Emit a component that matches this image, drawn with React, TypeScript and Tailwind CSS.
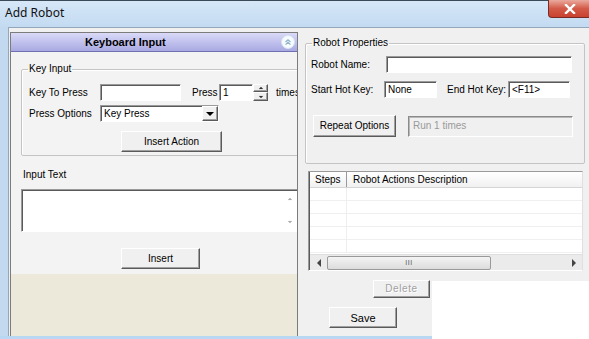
import React from "react";

const sunken =
  "bg-white border border-t-[#9a9a9a] border-l-[#9a9a9a] border-b-white border-r-white shadow-[inset_1px_1px_0_#5a5a5a]";
const raised =
  "bg-[#f0f0f0] border border-t-white border-l-white border-b-[#5a5a5a] border-r-[#5a5a5a] shadow-[inset_-1px_-1px_0_#a0a0a0]";

function Btn({ label, cls, disabled }: { label: string; cls: string; disabled?: boolean }) {
  return (
    <div className={`${raised} ${cls} flex items-center justify-center shrink-0`}>
      <span className={disabled ? "text-[#a0a0a0] [text-shadow:1px_1px_0_#ffffff] tracking-[0.6px]" : ""}>{label}</span>
    </div>
  );
}

function Tri({ dir, cls }: { dir: "up" | "down" | "left" | "right"; cls?: string }) {
  const pts =
    dir === "up" ? "0,4 4,0 8,4" : dir === "down" ? "0,0 8,0 4,4" : dir === "left" ? "4,0 4,8 0,4" : "0,0 0,8 4,4";
  const w = dir === "up" || dir === "down" ? 8 : 4;
  const h = dir === "up" || dir === "down" ? 4 : 8;
  return (
    <svg width={w} height={h} viewBox={`0 0 ${w} ${h}`} className={cls}>
      <polygon points={pts} fill="currentColor" />
    </svg>
  );
}

export default function App() {
  return (
    <div
      className="relative w-[589px] h-[339px] overflow-hidden flex flex-col bg-[#c2d9f0] text-[10px] leading-[12px] text-black"
      style={{ fontFamily: '"Liberation Sans", Arial, sans-serif' }}
    >
      {/* Title bar */}
      <div className="h-[27px] shrink-0 flex items-center pl-[5px] pb-[3px] border-t border-[#3c4a58] bg-gradient-to-b from-[#d6e7f8] to-[#c3daf1]">
        <span className="text-[12px] text-[#111]" style={{ fontFamily: '"Noto Sans", sans-serif' }}>
          Add Robot
        </span>
      </div>
      <div className="absolute left-[548px] top-0 w-[45px] h-[18px] rounded-bl-[4px] border border-t-0 border-[#7a2b25] bg-gradient-to-b from-[#e9a99d] via-[#d35a48] to-[#c9412f] flex items-center justify-center pr-[2px]">
        <svg width="12" height="10" viewBox="0 0 12 10">
          <path d="M2 1 L10 9 M10 1 L2 9" stroke="#ffffff" strokeWidth="2.4" strokeLinecap="square" />
        </svg>
      </div>

      {/* Body */}
      <div className="flex flex-1">
        <div className="w-[8px] shrink-0" />
        <div className="flex-1 flex items-start bg-[#f0f0f0] border-t border-l border-[#93a6ba]">
          {/* Left panel */}
          <div className="ml-[1px] mt-[4px] w-[288px] self-stretch flex flex-col overflow-hidden border-l border-r border-t border-[#7c7c7c] bg-[#f3f3f3]">
            <div className="h-[19px] shrink-0 flex items-center justify-between border-b border-[#7070b4] bg-gradient-to-b from-[#dadaf8] to-[#a9a9e2]">
              <span className="pl-[74px] text-[11px] font-bold">Keyboard Input</span>
              <svg width="14" height="14" viewBox="0 0 14 14" className="mr-[2px]">
                <circle cx="7" cy="7" r="6.5" fill="#f6fbfd" stroke="#d8e4f0" />
                <path d="M4.5 7 L7 4.8 L9.5 7 M4.5 9.6 L7 7.4 L9.5 9.6" fill="none" stroke="#8fb3c8" strokeWidth="1.2" />
              </svg>
            </div>

            <fieldset className="ml-[10px] mt-[11px] w-[290px] shrink-0 border border-[#c4c4c4] rounded-[2px] shadow-[inset_1px_1px_0_#ffffff]">
              <legend className="ml-[6px] px-[1px] leading-[12px]">Key Input</legend>
              <div className="pl-[7px] pt-[9px] pb-[3px]">
                <div className="flex items-center h-[17px]">
                  <span className="w-[71px] shrink-0">Key To Press</span>
                  <div className={`${sunken} w-[81px] h-[17px] shrink-0`} />
                  <span className="ml-[11px] w-[27px] shrink-0">Press</span>
                  <div className={`${sunken} w-[34px] h-[17px] shrink-0 flex items-center pl-[3px]`}>1</div>
                  <div className="w-[15px] h-[17px] shrink-0 flex flex-col">
                    <div className={`${raised} h-[8px] flex items-center justify-center text-[#333]`}>
                      <Tri dir="up" cls="scale-[0.6]" />
                    </div>
                    <div className={`${raised} h-[9px] flex items-center justify-center text-[#333]`}>
                      <Tri dir="down" cls="scale-[0.6]" />
                    </div>
                  </div>
                  <span className="ml-[8px]">times</span>
                </div>
                <div className="flex items-center h-[17px] mt-[4px]">
                  <span className="w-[71px] shrink-0">Press Options</span>
                  <div className={`${sunken} w-[119px] h-[17px] shrink-0 flex items-center justify-between pl-[3px]`}>
                    <span>Key Press</span>
                    <div className={`${raised} w-[16px] h-[15px] flex items-center justify-center text-black`}>
                      <Tri dir="down" />
                    </div>
                  </div>
                </div>
                <Btn label="Insert Action" cls="mt-[9px] ml-[92px] w-[101px] h-[21px]" />
              </div>
            </fieldset>

            <span className="ml-[12px] mt-[13px] shrink-0">Input Text</span>
            <div className={`${sunken} ml-[10px] mt-[8px] w-[280px] h-[43px] shrink-0 flex justify-end`}>
              <div className="w-[16px] mr-[2px] flex flex-col items-center justify-between py-[7px] text-[#a8a8a8]">
                <Tri dir="up" cls="scale-[0.6]" />
                <Tri dir="down" cls="scale-[0.6]" />
              </div>
            </div>
            <Btn label="Insert" cls="ml-[110px] mt-[16px] w-[79px] h-[21px]" />
            <div className="mt-[5px] flex-1 bg-[#ece8da]" />
          </div>

          {/* Right column */}
          <div className="ml-[7px] flex flex-col">
            <fieldset className="mt-[9px] w-[280px] border border-[#c4c4c4] rounded-[2px] shadow-[inset_1px_1px_0_#ffffff]">
              <legend className="ml-[6px] px-[1px] leading-[12px]">Robot Properties</legend>
              <div className="pl-[5px] pt-[7px] pb-[26px]">
                <div className="flex items-center h-[17px]">
                  <span className="w-[75px] shrink-0">Robot Name:</span>
                  <div className={`${sunken} w-[186px] h-[17px]`} />
                </div>
                <div className="flex items-center h-[17px] mt-[8px]">
                  <span className="w-[73px] shrink-0">Start Hot Key:</span>
                  <div className={`${sunken} w-[53px] h-[17px] flex items-center pl-[3px]`}>None</div>
                  <span className="ml-[10px] w-[61px] shrink-0">End Hot Key:</span>
                  <div className={`${sunken} w-[62px] h-[17px] flex items-center pl-[3px]`}>&lt;F11&gt;</div>
                </div>
                <div className="flex items-center mt-[17px]">
                  <Btn label="Repeat Options" cls="ml-[2px] w-[83px] h-[22px]" />
                  <div className="ml-[12px] w-[165px] h-[21px] bg-[#f0f0f0] border border-t-[#8a8a8a] border-l-[#8a8a8a] border-b-white border-r-white shadow-[inset_1px_1px_0_#b8b8b8] flex items-center pl-[4px] text-[#9a9a9a]">
                    Run 1 times
                  </div>
                </div>
              </div>
            </fieldset>

            {/* Table */}
            <div className="mt-[7px] ml-[3px] w-[275px] h-[100px] flex flex-col bg-white border border-t-[#9a9a9a] border-l-[#9a9a9a] border-b-white border-r-[#e0e0e0] shadow-[inset_1px_1px_0_#5a5a5a]">
              <div className="h-[16px] shrink-0 flex items-center ml-[1px] bg-gradient-to-b from-white to-[#f1f1f1] border-b border-[#d5d5d5]">
                <span className="w-[37px] h-full flex items-center pl-[5px] border-r border-[#9a9a9a]">Steps</span>
                <span className="pl-[6px]">Robot Actions Description</span>
              </div>
              <div className="flex-1 flex flex-col ml-[1px]">
                {[0, 1, 2, 3, 4].map((i) => (
                  <div key={i} className="h-[13px] flex border-b border-[#efefef]">
                    <div className="w-[37px] border-r border-[#eeeeee]" />
                  </div>
                ))}
              </div>
              <div className="h-[16px] shrink-0 ml-[1px] flex items-center bg-[#ebebeb] border-t border-[#dedede]">
                <div className="w-[17px] flex justify-center text-[#444]">
                  <Tri dir="left" />
                </div>
                <div className="w-[164px] h-[14px] rounded-[2px] border border-[#9a9a9a] bg-gradient-to-b from-[#f4f4f4] to-[#dcdcdc] flex items-center justify-center">
                  <span className="text-[7px] leading-[7px] text-[#555] tracking-[0.5px]">III</span>
                </div>
                <div className="flex-1" />
                <div className="w-[17px] flex justify-center text-[#444]">
                  <Tri dir="right" />
                </div>
              </div>
            </div>

            <Btn label="Delete" cls="mt-[9px] ml-[68px] w-[57px] h-[18px]" disabled />
            <Btn label="Save" cls="mt-[9px] ml-[24px] w-[68px] h-[21px] text-[11px]" />
          </div>
        </div>
      </div>
      <div className="h-[3px] shrink-0 bg-[#b9d6f2]" />

      {/* Cropped-away area */}
      <div className="absolute left-[432px] top-[281px] w-[157px] h-[58px] bg-white" />
    </div>
  );
}
